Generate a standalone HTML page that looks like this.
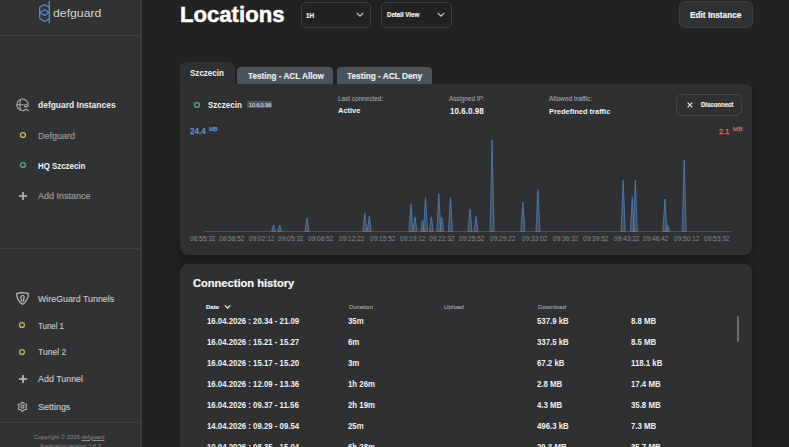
<!DOCTYPE html>
<html><head><meta charset="utf-8"><title>Locations</title>
<style>
html,body{margin:0;padding:0;}
body{width:789px;height:447px;overflow:hidden;position:relative;background:#222222;font-family:"Liberation Sans",sans-serif;}
.t{position:absolute;white-space:nowrap;transform-origin:0 0;}
.r{position:absolute;}
</style></head><body>
<div class="r" style="left:0px;top:0px;width:140px;height:447px;background:#313233;"></div>
<div class="r" style="left:140px;top:0px;width:2px;height:447px;background:#3c3d3f;"></div>
<div class="r" style="left:142px;top:0px;width:1px;height:447px;background:#1f2021;"></div>
<div class="r" style="left:0px;top:35px;width:140px;height:1px;background:#3e3f42;"></div>
<div class="r" style="left:0px;top:248px;width:140px;height:1px;background:#3e3f42;"></div>
<div class="r" style="left:0px;top:422px;width:140px;height:1px;background:#3e3f42;"></div>
<svg class="r" style="left:0;top:0" width="140" height="35" viewBox="0 0 140 35">
<g fill="none" stroke="#4c88d6" stroke-width="1.35" stroke-linejoin="round">
<path d="M49.3 1 V23.5"/>
<path d="M49.3 7.4 L44.6 4.7 L39.7 7.2 V18.7 L44.6 21.5 L49.3 18.7"/>
<path d="M39.7 12.5 L44.6 9.8 L49.3 12.5 L44.6 15.3 Z"/>
</g></svg>
<div class="t" style="left:53.31px;top:6.98px;font-size:11.60px;line-height:11.60px;font-weight:400;color:#d4d4d4;transform:scaleX(1.0580);">defguard</div>
<svg class="r" style="left:14px;top:96px" width="17" height="17" viewBox="0 0 17 17">
<g fill="none" stroke="#a9abad" stroke-width="1.1" stroke-linecap="round">
<path d="M9.49 14.36 A5.7 5.7 0 1 1 14.0 10.2"/>
<path d="M6.4 3.6 Q5.2 8.7 6.4 13.9 M3.0 8.7 H9.4"/>
<circle cx="11.9" cy="9.8" r="1.35"/>
<path d="M9.7 14.8 Q11.9 11.9 14.3 14.8"/>
</g></svg>
<div class="t" style="left:37.86px;top:101.19px;font-size:8.87px;line-height:8.87px;font-weight:700;color:#ececec;transform:scaleX(0.9554);">defguard Instances</div>
<svg class="r" style="left:17.50px;top:129.90px" width="10" height="10" viewBox="0 0 10 10"><circle cx="5" cy="5" r="2.45" fill="none" stroke="#c6b65c" stroke-width="1.3"/></svg>
<div class="t" style="left:37.94px;top:131.77px;font-size:9.01px;line-height:9.01px;font-weight:400;color:#9d9e9f;-webkit-text-stroke:0.15px #9d9e9f;">Defguard</div>
<svg class="r" style="left:17.50px;top:160.20px" width="10" height="10" viewBox="0 0 10 10"><circle cx="5" cy="5" r="2.45" fill="none" stroke="#5aa57a" stroke-width="1.3"/></svg>
<div class="t" style="left:37.98px;top:162.23px;font-size:8.47px;line-height:8.47px;font-weight:700;color:#f2f2f2;transform:scaleX(0.9300);">HQ Szczecin</div>
<svg class="r" style="left:16.80px;top:190.20px" width="12" height="12" viewBox="0 0 12 12"><path d="M1.9 6 H10.1 M6 1.9 V10.1" stroke="#b8bdbd" stroke-width="1.6"/></svg>
<div class="t" style="left:37.94px;top:192.17px;font-size:9.01px;line-height:9.01px;font-weight:400;color:#9d9e9f;-webkit-text-stroke:0.15px #9d9e9f;">Add Instance</div>
<svg class="r" style="left:14px;top:290px" width="17" height="17" viewBox="0 0 17 17">
<g fill="none" stroke="#a9abad" stroke-width="1.35" stroke-linejoin="round">
<path d="M2.7 3.5 L8.5 2.5 L14.3 3.5 Q14.4 10.2 8.5 14.4 Q2.6 10.2 2.7 3.5 Z"/>
<path d="M8.5 5.3 A1.8 1.8 0 0 1 9.7 8.4 L9.7 10.4 Q8.5 11.5 7.3 10.4 L7.3 8.4 A1.8 1.8 0 0 1 8.5 5.3 Z"/>
</g></svg>
<div class="t" style="left:37.85px;top:294.67px;font-size:9.01px;line-height:9.01px;font-weight:400;color:#c6c7c8;transform:scaleX(0.9817);-webkit-text-stroke:0.15px #c6c7c8;">WireGuard Tunnels</div>
<svg class="r" style="left:17.30px;top:319.70px" width="10" height="10" viewBox="0 0 10 10"><circle cx="5" cy="5" r="2.45" fill="none" stroke="#c6b65c" stroke-width="1.3"/></svg>
<div class="t" style="left:38.18px;top:321.82px;font-size:8.48px;line-height:8.48px;font-weight:400;color:#c6c7c8;transform:scaleX(0.9300);-webkit-text-stroke:0.15px #c6c7c8;">Tunel 1</div>
<svg class="r" style="left:17.30px;top:347.00px" width="10" height="10" viewBox="0 0 10 10"><circle cx="5" cy="5" r="2.45" fill="none" stroke="#c6b65c" stroke-width="1.3"/></svg>
<div class="t" style="left:38.16px;top:348.27px;font-size:9.01px;line-height:9.01px;font-weight:400;color:#c6c7c8;transform:scaleX(0.9504);-webkit-text-stroke:0.15px #c6c7c8;">Tunel 2</div>
<svg class="r" style="left:16.60px;top:372.70px" width="12" height="12" viewBox="0 0 12 12"><path d="M1.9 6 H10.1 M6 1.9 V10.1" stroke="#c3c6c6" stroke-width="1.6"/></svg>
<div class="t" style="left:38.14px;top:374.67px;font-size:9.01px;line-height:9.01px;font-weight:400;color:#c6c7c8;transform:scaleX(0.9888);-webkit-text-stroke:0.15px #c6c7c8;">Add Tunnel</div>
<svg class="r" style="left:14px;top:398px" width="17" height="17" viewBox="0 0 17 17">
<g fill="none" stroke="#a9abad" stroke-width="1.2" stroke-linejoin="round">
<path d="M8.5 4.05 L10.35 5.98 L12.64 6.25 L11.93 8.8 L12.64 11.35 L10.35 11.62 L8.5 13.55 L6.65 11.62 L4.36 11.35 L5.07 8.8 L4.36 6.25 L6.65 5.98 Z"/>
<circle cx="8.5" cy="8.8" r="1.4"/>
</g></svg>
<div class="t" style="left:38.14px;top:403.07px;font-size:9.01px;line-height:9.01px;font-weight:400;color:#c6c7c8;transform:scaleX(0.9940);-webkit-text-stroke:0.15px #c6c7c8;">Settings</div>
<div class="t" style="left:34.47px;top:434.69px;font-size:5.80px;line-height:5.80px;font-weight:400;color:#8c8d8f;transform:scaleX(1.0107);">Copyright © 2026 <u>defguard</u></div>
<div class="t" style="left:39.58px;top:444.36px;font-size:5.60px;line-height:5.60px;font-weight:400;color:#8c8d8f;transform:scaleX(0.9730);">Application version: 1.6.7</div>
<div class="t" style="left:179.91px;top:3.89px;font-size:22.17px;line-height:22.17px;font-weight:700;color:#ffffff;-webkit-text-stroke:0.45px #fff;">Locations</div>
<div class="r" style="left:300.7px;top:1.5px;width:70.6px;height:26px;border:1px solid #3e3e3e;border-radius:5px;box-sizing:border-box"></div>
<div class="t" style="left:306.35px;top:11.89px;font-size:6.98px;line-height:6.98px;font-weight:700;color:#f0f0f0;transform:scaleX(0.9055);-webkit-text-stroke:0.2px #f0f0f0;">1H</div>
<svg class="r" style="left:356.3px;top:11px" width="8" height="8" viewBox="0 0 8 8"><path d="M1 2.2 L4 5.2 L7 2.2" fill="none" stroke="#d0d0d0" stroke-width="1.05" stroke-linecap="round"/></svg>
<div class="r" style="left:381.2px;top:1.5px;width:70.6px;height:26px;border:1px solid #3e3e3e;border-radius:5px;box-sizing:border-box"></div>
<div class="t" style="left:386.66px;top:12.23px;font-size:6.58px;line-height:6.58px;font-weight:700;color:#f0f0f0;transform:scaleX(0.9300);-webkit-text-stroke:0.2px #f0f0f0;">Detail View</div>
<svg class="r" style="left:437px;top:11px" width="8" height="8" viewBox="0 0 8 8"><path d="M1 2.2 L4 5.2 L7 2.2" fill="none" stroke="#d0d0d0" stroke-width="1.05" stroke-linecap="round"/></svg>
<div class="r" style="left:679px;top:1.4px;width:73.7px;height:26.5px;background:#303132;border:1px solid #3c3d3e;border-radius:6px;box-sizing:border-box"></div>
<div class="t" style="left:689.67px;top:11.07px;font-size:8.89px;line-height:8.89px;font-weight:700;color:#f4f4f4;transform:scaleX(0.9300);-webkit-text-stroke:0.2px #f4f4f4;">Edit Instance</div>
<div class="r" style="left:180px;top:84px;width:572px;height:171px;background:#2f3032;border-radius:0 6px 8px 8px;box-shadow:0 3px 7px rgba(0,0,0,0.35)"></div>
<div class="r" style="left:180px;top:62px;width:55px;height:30px;background:#2f3032;border-radius:6px 6px 0 0"></div>
<div class="t" style="left:190.28px;top:69.24px;font-size:8.58px;line-height:8.58px;font-weight:700;color:#f2f2f2;transform:scaleX(0.9367);">Szczecin</div>
<div class="r" style="left:237.2px;top:67px;width:96.3px;height:16.8px;background:#4b535a;border-radius:4px 4px 0 0"></div>
<div class="t" style="left:247.67px;top:72.02px;font-size:8.72px;line-height:8.72px;font-weight:700;color:#eceef0;transform:scaleX(0.9369);-webkit-text-stroke:0.15px #eceef0;">Testing - ACL Allow</div>
<div class="r" style="left:337px;top:67px;width:95.2px;height:16.8px;background:#4b535a;border-radius:4px 4px 0 0"></div>
<div class="t" style="left:346.67px;top:72.02px;font-size:8.72px;line-height:8.72px;font-weight:700;color:#eceef0;transform:scaleX(0.9483);-webkit-text-stroke:0.15px #eceef0;">Testing - ACL Deny</div>
<svg class="r" style="left:191.70px;top:99.60px" width="10" height="10" viewBox="0 0 10 10"><circle cx="5" cy="5" r="2.45" fill="none" stroke="#5aa57a" stroke-width="1.3"/></svg>
<div class="t" style="left:208.28px;top:100.89px;font-size:8.87px;line-height:8.87px;font-weight:700;color:#f2f2f2;transform:scaleX(0.9023);">Szczecin</div>
<div class="r" style="left:247.1px;top:101.1px;width:25.1px;height:7.1px;background:#4c545a;border-radius:1.5px"></div>
<div class="t" style="left:248.89px;top:102.82px;font-size:5.52px;line-height:5.52px;font-weight:400;color:#cdd1d5;transform:scaleX(0.9654);-webkit-text-stroke:0.15px #cdd1d5;">10.6.0.98</div>
<div class="t" style="left:337.94px;top:95.59px;font-size:6.40px;line-height:6.40px;font-weight:400;color:#a3a4a6;-webkit-text-stroke:0.1px #a3a4a6;">Last connected:</div>
<div class="t" style="left:337.90px;top:107.31px;font-size:8.02px;line-height:8.02px;font-weight:700;color:#f4f4f4;transform:scaleX(0.9300);">Active</div>
<div class="t" style="left:448.85px;top:95.59px;font-size:6.40px;line-height:6.40px;font-weight:400;color:#a3a4a6;transform:scaleX(0.9855);-webkit-text-stroke:0.1px #a3a4a6;">Assigned IP:</div>
<div class="t" style="left:450.48px;top:107.04px;font-size:8.69px;line-height:8.69px;font-weight:700;color:#f4f4f4;transform:scaleX(0.9300);">10.6.0.98</div>
<div class="t" style="left:549.33px;top:95.59px;font-size:6.40px;line-height:6.40px;font-weight:400;color:#a3a4a6;transform:scaleX(1.0400);-webkit-text-stroke:0.1px #a3a4a6;">Allowed traffic:</div>
<div class="t" style="left:549.30px;top:107.60px;font-size:8.03px;line-height:8.03px;font-weight:700;color:#f4f4f4;transform:scaleX(0.9300);">Predefined traffic</div>
<div class="r" style="left:676.3px;top:94.4px;width:65.7px;height:21.2px;border:1px solid #46474a;border-radius:6px;box-sizing:border-box"></div>
<svg class="r" style="left:686px;top:101px" width="8" height="8" viewBox="0 0 8 8"><path d="M1.6 1.6 L6.3 6.3 M6.3 1.6 L1.6 6.3" stroke="#e8e8e8" stroke-width="1.15"/></svg>
<div class="t" style="left:700.76px;top:102.33px;font-size:6.46px;line-height:6.46px;font-weight:700;color:#f4f4f4;transform:scaleX(0.9300);-webkit-text-stroke:0.15px #f4f4f4;">Disconnect</div>
<div class="t" style="left:190.48px;top:127.29px;font-size:8.87px;line-height:8.87px;font-weight:400;color:#6399de;transform:scaleX(0.9152);-webkit-text-stroke:0.3px #6399de;">24.4</div>
<div class="t" style="left:208.57px;top:126.41px;font-size:6.25px;line-height:6.25px;font-weight:400;color:#6399de;transform:scaleX(0.9333);-webkit-text-stroke:0.25px #6399de;">MB</div>
<div class="t" style="left:719.30px;top:128.03px;font-size:8.00px;line-height:8.00px;font-weight:400;color:#db6a5e;transform:scaleX(0.9300);-webkit-text-stroke:0.3px #db6a5e;">2.1</div>
<div class="t" style="left:732.85px;top:126.41px;font-size:6.25px;line-height:6.25px;font-weight:400;color:#db6a5e;transform:scaleX(0.9889);-webkit-text-stroke:0.25px #db6a5e;">MB</div>
<svg class="r" style="left:0;top:0" width="789" height="447" viewBox="0 0 789 447"><path d="M204 231.5 H731" stroke="#55575b" stroke-width="0.9"/><path d="M271.6 231.5 L273.6 224.9 L275.6 231.5" fill="rgba(150,180,220,0.22)" stroke="#4a80c2" stroke-width="0.8" stroke-linejoin="round"/><path d="M277.7 231.5 L279.7 225 L281.7 231.5" fill="rgba(150,180,220,0.22)" stroke="#4a80c2" stroke-width="0.8" stroke-linejoin="round"/><path d="M305.0 231.5 L307.0 218 L309.0 231.5" fill="rgba(150,180,220,0.22)" stroke="#4a80c2" stroke-width="0.8" stroke-linejoin="round"/><path d="M362.8 231.5 L364.8 212.8 L366.8 231.5" fill="rgba(150,180,220,0.22)" stroke="#4a80c2" stroke-width="0.8" stroke-linejoin="round"/><path d="M367.3 231.5 L369.3 216.4 L371.3 231.5" fill="rgba(150,180,220,0.22)" stroke="#4a80c2" stroke-width="0.8" stroke-linejoin="round"/><path d="M409.0 231.5 L411.0 204 L413.0 231.5" fill="rgba(150,180,220,0.22)" stroke="#4a80c2" stroke-width="0.8" stroke-linejoin="round"/><path d="M413.0 231.5 L415.0 216.9 L417.0 231.5" fill="rgba(150,180,220,0.22)" stroke="#4a80c2" stroke-width="0.8" stroke-linejoin="round"/><path d="M420.5 231.5 L422.5 220 L424.5 231.5" fill="rgba(150,180,220,0.22)" stroke="#4a80c2" stroke-width="0.8" stroke-linejoin="round"/><path d="M423.5 231.5 L425.5 197.7 L427.5 231.5" fill="rgba(150,180,220,0.22)" stroke="#4a80c2" stroke-width="0.8" stroke-linejoin="round"/><path d="M429.4 231.5 L431.4 216.9 L433.4 231.5" fill="rgba(150,180,220,0.22)" stroke="#4a80c2" stroke-width="0.8" stroke-linejoin="round"/><path d="M436.8 231.5 L438.8 193.8 L440.8 231.5" fill="rgba(150,180,220,0.22)" stroke="#4a80c2" stroke-width="0.8" stroke-linejoin="round"/><path d="M439.7 231.5 L441.7 217.3 L443.7 231.5" fill="rgba(150,180,220,0.22)" stroke="#4a80c2" stroke-width="0.8" stroke-linejoin="round"/><path d="M448.5 231.5 L450.5 197.7 L452.5 231.5" fill="rgba(150,180,220,0.22)" stroke="#4a80c2" stroke-width="0.8" stroke-linejoin="round"/><path d="M468.0 231.5 L470.0 209.3 L472.0 231.5" fill="rgba(150,180,220,0.22)" stroke="#4a80c2" stroke-width="0.8" stroke-linejoin="round"/><path d="M474.0 231.5 L476.0 216.4 L478.0 231.5" fill="rgba(150,180,220,0.22)" stroke="#4a80c2" stroke-width="0.8" stroke-linejoin="round"/><path d="M490.1 231.5 L492.1 139.9 L494.1 231.5" fill="rgba(150,180,220,0.22)" stroke="#4a80c2" stroke-width="0.8" stroke-linejoin="round"/><path d="M520.9 231.5 L522.9 201.9 L524.9 231.5" fill="rgba(150,180,220,0.22)" stroke="#4a80c2" stroke-width="0.8" stroke-linejoin="round"/><path d="M535.9 231.5 L537.9 189.9 L539.9 231.5" fill="rgba(150,180,220,0.22)" stroke="#4a80c2" stroke-width="0.8" stroke-linejoin="round"/><path d="M621.2 231.5 L623.2 180.2 L625.2 231.5" fill="rgba(150,180,220,0.22)" stroke="#4a80c2" stroke-width="0.8" stroke-linejoin="round"/><path d="M630.3 231.5 L632.3 196.7 L634.3 231.5" fill="rgba(150,180,220,0.22)" stroke="#4a80c2" stroke-width="0.8" stroke-linejoin="round"/><path d="M633.3 231.5 L635.3 180.2 L637.3 231.5" fill="rgba(150,180,220,0.22)" stroke="#4a80c2" stroke-width="0.8" stroke-linejoin="round"/><path d="M662.9 231.5 L664.9 199 L666.9 231.5" fill="rgba(150,180,220,0.22)" stroke="#4a80c2" stroke-width="0.8" stroke-linejoin="round"/><path d="M665.6 231.5 L667.6 225.5 L669.6 231.5" fill="rgba(150,180,220,0.22)" stroke="#4a80c2" stroke-width="0.8" stroke-linejoin="round"/><path d="M682.2 231.5 L684.2 160.1 L686.2 231.5" fill="rgba(150,180,220,0.22)" stroke="#4a80c2" stroke-width="0.8" stroke-linejoin="round"/><path d="M272.4 231.5 H274.8" stroke="#b05a50" stroke-width="1"/><path d="M278.5 231.5 H280.9" stroke="#b05a50" stroke-width="1"/><path d="M305.8 231.5 H308.2" stroke="#b05a50" stroke-width="1"/><path d="M363.6 231.5 H366.0" stroke="#b05a50" stroke-width="1"/><path d="M368.1 231.5 H370.5" stroke="#b05a50" stroke-width="1"/><path d="M409.8 231.5 H412.2" stroke="#b05a50" stroke-width="1"/><path d="M413.8 231.5 H416.2" stroke="#b05a50" stroke-width="1"/><path d="M421.3 231.5 H423.7" stroke="#b05a50" stroke-width="1"/><path d="M424.3 231.5 H426.7" stroke="#b05a50" stroke-width="1"/><path d="M430.2 231.5 H432.6" stroke="#b05a50" stroke-width="1"/><path d="M437.6 231.5 H440.0" stroke="#b05a50" stroke-width="1"/><path d="M440.5 231.5 H442.9" stroke="#b05a50" stroke-width="1"/><path d="M449.3 231.5 H451.7" stroke="#b05a50" stroke-width="1"/><path d="M468.8 231.5 H471.2" stroke="#b05a50" stroke-width="1"/><path d="M474.8 231.5 H477.2" stroke="#b05a50" stroke-width="1"/><path d="M490.9 231.5 H493.3" stroke="#b05a50" stroke-width="1"/><path d="M521.7 231.5 H524.1" stroke="#b05a50" stroke-width="1"/><path d="M536.7 231.5 H539.1" stroke="#b05a50" stroke-width="1"/><path d="M622.0 231.5 H624.4" stroke="#b05a50" stroke-width="1"/><path d="M631.1 231.5 H633.5" stroke="#b05a50" stroke-width="1"/><path d="M634.1 231.5 H636.5" stroke="#b05a50" stroke-width="1"/><path d="M663.7 231.5 H666.1" stroke="#b05a50" stroke-width="1"/><path d="M666.4 231.5 H668.8" stroke="#b05a50" stroke-width="1"/><path d="M683.0 231.5 H685.4" stroke="#b05a50" stroke-width="1"/></svg>
<div class="t" style="left:189.64px;top:235.84px;font-size:6.69px;line-height:6.69px;font-weight:400;color:#8a8c8f;transform:scaleX(0.9772);">08:55:32</div>
<div class="t" style="left:219.20px;top:235.84px;font-size:6.69px;line-height:6.69px;font-weight:400;color:#8a8c8f;transform:scaleX(0.9772);">08:58:52</div>
<div class="t" style="left:248.77px;top:235.84px;font-size:6.69px;line-height:6.69px;font-weight:400;color:#8a8c8f;transform:scaleX(0.9772);">09:02:12</div>
<div class="t" style="left:278.33px;top:235.84px;font-size:6.69px;line-height:6.69px;font-weight:400;color:#8a8c8f;transform:scaleX(0.9772);">09:05:32</div>
<div class="t" style="left:307.89px;top:235.84px;font-size:6.69px;line-height:6.69px;font-weight:400;color:#8a8c8f;transform:scaleX(0.9772);">09:08:52</div>
<div class="t" style="left:338.93px;top:235.84px;font-size:6.69px;line-height:6.69px;font-weight:400;color:#8a8c8f;transform:scaleX(0.9772);">09:12:22</div>
<div class="t" style="left:369.97px;top:235.84px;font-size:6.69px;line-height:6.69px;font-weight:400;color:#8a8c8f;transform:scaleX(0.9772);">09:15:52</div>
<div class="t" style="left:399.54px;top:235.84px;font-size:6.69px;line-height:6.69px;font-weight:400;color:#8a8c8f;transform:scaleX(0.9772);">09:19:12</div>
<div class="t" style="left:429.10px;top:235.84px;font-size:6.69px;line-height:6.69px;font-weight:400;color:#8a8c8f;transform:scaleX(0.9772);">09:22:32</div>
<div class="t" style="left:458.66px;top:235.84px;font-size:6.69px;line-height:6.69px;font-weight:400;color:#8a8c8f;transform:scaleX(0.9772);">09:25:52</div>
<div class="t" style="left:489.71px;top:235.84px;font-size:6.69px;line-height:6.69px;font-weight:400;color:#8a8c8f;transform:scaleX(0.9772);">09:29:22</div>
<div class="t" style="left:522.22px;top:235.84px;font-size:6.69px;line-height:6.69px;font-weight:400;color:#8a8c8f;transform:scaleX(0.9772);">09:33:02</div>
<div class="t" style="left:553.27px;top:235.84px;font-size:6.69px;line-height:6.69px;font-weight:400;color:#8a8c8f;transform:scaleX(0.9772);">09:36:32</div>
<div class="t" style="left:582.83px;top:235.84px;font-size:6.69px;line-height:6.69px;font-weight:400;color:#8a8c8f;transform:scaleX(0.9772);">09:39:52</div>
<div class="t" style="left:613.87px;top:235.84px;font-size:6.69px;line-height:6.69px;font-weight:400;color:#8a8c8f;transform:scaleX(0.9772);">09:43:22</div>
<div class="t" style="left:643.43px;top:235.84px;font-size:6.69px;line-height:6.69px;font-weight:400;color:#8a8c8f;transform:scaleX(0.9772);">09:46:42</div>
<div class="t" style="left:674.48px;top:235.84px;font-size:6.69px;line-height:6.69px;font-weight:400;color:#8a8c8f;transform:scaleX(0.9772);">09:50:12</div>
<div class="t" style="left:704.04px;top:235.84px;font-size:6.69px;line-height:6.69px;font-weight:400;color:#8a8c8f;transform:scaleX(0.9772);">09:53:32</div>
<div class="r" style="left:180px;top:264px;width:572px;height:200px;background:#2f3032;border-radius:8px 8px 0 0;box-shadow:0 0 7px rgba(0,0,0,0.3)"></div>
<div class="t" style="left:193.06px;top:277.92px;font-size:10.61px;line-height:10.61px;font-weight:700;color:#f6f6f6;transform:scaleX(1.0465);-webkit-text-stroke:0.2px #f6f6f6;">Connection history</div>
<div class="t" style="left:205.86px;top:304.56px;font-size:5.96px;line-height:5.96px;font-weight:700;color:#f0f0f0;transform:scaleX(1.0146);-webkit-text-stroke:0.15px #f0f0f0;">Date</div>
<svg class="r" style="left:223px;top:304px" width="9" height="6" viewBox="0 0 9 6"><path d="M2.2 1.6 L4.6 4.0 L7.0 1.6" fill="none" stroke="#e8e8e8" stroke-width="1.25" stroke-linecap="round"/></svg>
<div class="t" style="left:348.75px;top:304.39px;font-size:6.15px;line-height:6.15px;font-weight:400;color:#a0a2a4;transform:scaleX(1.0300);-webkit-text-stroke:0.12px #a0a2a4;">Duration</div>
<div class="t" style="left:443.55px;top:304.56px;font-size:5.96px;line-height:5.96px;font-weight:400;color:#a0a2a4;transform:scaleX(1.0503);-webkit-text-stroke:0.12px #a0a2a4;">Upload</div>
<div class="t" style="left:538.35px;top:304.56px;font-size:5.96px;line-height:5.96px;font-weight:400;color:#a0a2a4;transform:scaleX(1.0596);-webkit-text-stroke:0.12px #a0a2a4;">Download</div>
<div class="t" style="left:206.69px;top:318.26px;font-size:8.20px;line-height:8.20px;font-weight:700;color:#f0f0f0;transform:scaleX(0.9550);">16.04.2026 : 20.34 - 21.09</div>
<div class="t" style="left:347.89px;top:318.26px;font-size:8.20px;line-height:8.20px;font-weight:700;color:#f0f0f0;transform:scaleX(0.9550);">35m</div>
<div class="t" style="left:537.19px;top:318.26px;font-size:8.20px;line-height:8.20px;font-weight:700;color:#f0f0f0;transform:scaleX(0.9550);">537.9 kB</div>
<div class="t" style="left:631.39px;top:318.26px;font-size:8.20px;line-height:8.20px;font-weight:700;color:#f0f0f0;transform:scaleX(0.9550);">8.8 MB</div>
<div class="t" style="left:206.69px;top:339.26px;font-size:8.20px;line-height:8.20px;font-weight:700;color:#f0f0f0;transform:scaleX(0.9550);">16.04.2026 : 15.21 - 15.27</div>
<div class="t" style="left:347.89px;top:339.26px;font-size:8.20px;line-height:8.20px;font-weight:700;color:#f0f0f0;transform:scaleX(0.9550);">6m</div>
<div class="t" style="left:537.19px;top:339.26px;font-size:8.20px;line-height:8.20px;font-weight:700;color:#f0f0f0;transform:scaleX(0.9550);">337.5 kB</div>
<div class="t" style="left:631.39px;top:339.26px;font-size:8.20px;line-height:8.20px;font-weight:700;color:#f0f0f0;transform:scaleX(0.9550);">8.5 MB</div>
<div class="t" style="left:206.69px;top:360.26px;font-size:8.20px;line-height:8.20px;font-weight:700;color:#f0f0f0;transform:scaleX(0.9550);">16.04.2026 : 15.17 - 15.20</div>
<div class="t" style="left:347.89px;top:360.26px;font-size:8.20px;line-height:8.20px;font-weight:700;color:#f0f0f0;transform:scaleX(0.9550);">3m</div>
<div class="t" style="left:537.19px;top:360.26px;font-size:8.20px;line-height:8.20px;font-weight:700;color:#f0f0f0;transform:scaleX(0.9550);">67.2 kB</div>
<div class="t" style="left:631.39px;top:360.26px;font-size:8.20px;line-height:8.20px;font-weight:700;color:#f0f0f0;transform:scaleX(0.9550);">118.1 kB</div>
<div class="t" style="left:206.69px;top:381.26px;font-size:8.20px;line-height:8.20px;font-weight:700;color:#f0f0f0;transform:scaleX(0.9550);">16.04.2026 : 12.09 - 13.36</div>
<div class="t" style="left:347.89px;top:381.26px;font-size:8.20px;line-height:8.20px;font-weight:700;color:#f0f0f0;transform:scaleX(0.9550);">1h 26m</div>
<div class="t" style="left:537.19px;top:381.26px;font-size:8.20px;line-height:8.20px;font-weight:700;color:#f0f0f0;transform:scaleX(0.9550);">2.8 MB</div>
<div class="t" style="left:631.39px;top:381.26px;font-size:8.20px;line-height:8.20px;font-weight:700;color:#f0f0f0;transform:scaleX(0.9550);">17.4 MB</div>
<div class="t" style="left:206.69px;top:402.26px;font-size:8.20px;line-height:8.20px;font-weight:700;color:#f0f0f0;transform:scaleX(0.9550);">16.04.2026 : 09.37 - 11.56</div>
<div class="t" style="left:347.89px;top:402.26px;font-size:8.20px;line-height:8.20px;font-weight:700;color:#f0f0f0;transform:scaleX(0.9550);">2h 19m</div>
<div class="t" style="left:537.19px;top:402.26px;font-size:8.20px;line-height:8.20px;font-weight:700;color:#f0f0f0;transform:scaleX(0.9550);">4.3 MB</div>
<div class="t" style="left:631.39px;top:402.26px;font-size:8.20px;line-height:8.20px;font-weight:700;color:#f0f0f0;transform:scaleX(0.9550);">35.8 MB</div>
<div class="t" style="left:206.69px;top:423.26px;font-size:8.20px;line-height:8.20px;font-weight:700;color:#f0f0f0;transform:scaleX(0.9550);">14.04.2026 : 09.29 - 09.54</div>
<div class="t" style="left:347.89px;top:423.26px;font-size:8.20px;line-height:8.20px;font-weight:700;color:#f0f0f0;transform:scaleX(0.9550);">25m</div>
<div class="t" style="left:537.19px;top:423.26px;font-size:8.20px;line-height:8.20px;font-weight:700;color:#f0f0f0;transform:scaleX(0.9550);">496.3 kB</div>
<div class="t" style="left:631.39px;top:423.26px;font-size:8.20px;line-height:8.20px;font-weight:700;color:#f0f0f0;transform:scaleX(0.9550);">7.3 MB</div>
<div class="t" style="left:206.69px;top:444.26px;font-size:8.20px;line-height:8.20px;font-weight:700;color:#f0f0f0;transform:scaleX(0.9550);">10.04.2026 : 08.35 - 15.04</div>
<div class="t" style="left:347.89px;top:444.26px;font-size:8.20px;line-height:8.20px;font-weight:700;color:#f0f0f0;transform:scaleX(0.9550);">6h 28m</div>
<div class="t" style="left:537.19px;top:444.26px;font-size:8.20px;line-height:8.20px;font-weight:700;color:#f0f0f0;transform:scaleX(0.9550);">29.3 MB</div>
<div class="t" style="left:631.39px;top:444.26px;font-size:8.20px;line-height:8.20px;font-weight:700;color:#f0f0f0;transform:scaleX(0.9550);">35.7 MB</div>
<div class="r" style="left:737px;top:316px;width:2px;height:26px;background:#6a6c6f;border-radius:1px"></div>

</body></html>
